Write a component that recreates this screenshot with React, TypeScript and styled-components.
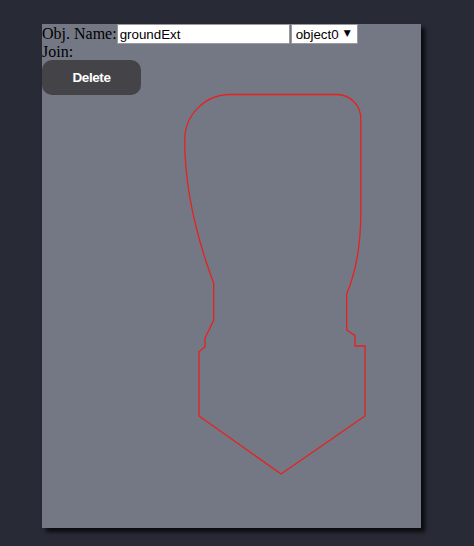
import React from "react";
import styled, { createGlobalStyle } from "styled-components";

const Global = createGlobalStyle`
  html, body { margin: 0; padding: 0; background: #282a36; }
  body { width: 474px; height: 546px; overflow: hidden; }
`;

const Page = styled.div`
  padding: 24px 0 0 42px;
`;

const Panel = styled.div`
  position: relative;
  width: 379px;
  height: 504px;
  background: #747884;
  box-shadow: 4px 4px 4px rgba(0, 0, 0, 0.75);
  font-family: "Liberation Serif", "Times New Roman", serif;
  font-size: 16px;
  color: #000;
`;

const Row = styled.div<{ $h: number }>`
  display: flex;
  align-items: center;
  height: ${(p) => p.$h}px;
  line-height: ${(p) => p.$h}px;
  position: relative;
  z-index: 1;
`;

const NameInput = styled.input`
  box-sizing: border-box;
  width: 173px;
  height: 20px;
  margin: 0 1px 0 0;
  padding: 1px 2px;
  border: 1px solid #9a9a9a;
  background: #fff;
  font-family: "Liberation Sans", Arial, sans-serif;
  font-size: 13.33px;
  color: #000;
  outline: none;
`;

const SelectBox = styled.div`
  position: relative;
  box-sizing: border-box;
  width: 67px;
  height: 20px;
  border: 1px solid #9a9a9a;
  background: #fff;
  display: flex;
  align-items: center;
`;

const Select = styled.select`
  appearance: none;
  border: none;
  background: transparent;
  width: 100%;
  height: 100%;
  padding: 0 0 0 4px;
  font-family: "Liberation Sans", Arial, sans-serif;
  font-size: 13.33px;
  color: #000;
  outline: none;
`;

const Arrow = styled.span`
  position: absolute;
  right: 6px;
  top: 0;
  line-height: 17px;
  font-size: 9px;
  font-family: "DejaVu Sans", sans-serif;
  pointer-events: none;
`;

const DeleteButton = styled.button`
  display: block;
  width: 99px;
  height: 35px;
  border: none;
  border-radius: 10px;
  background: #444448;
  color: #fff;
  font-family: "Liberation Sans", Arial, sans-serif;
  font-size: 13.5px;
  font-weight: 600;
  letter-spacing: -0.4px;
  position: relative;
  z-index: 1;
`;

const Drawing = styled.svg`
  position: absolute;
  left: 0;
  top: 0;
  width: 379px;
  height: 504px;
`;

const shape =
  "M 188 70.5 L 294.5 70.5 A 24 24 0 0 1 318.8 94.5 L 318.8 189 " +
  "C 318.8 225 313 250 304.7 270 L 304.7 306 L 313 311.7 L 313 322 L 323 322 " +
  "L 323 392 L 239 450 L 157 392 L 157 327.7 L 163 322.7 L 163 314.3 L 171.7 296 " +
  "L 171.7 259.3 C 157 220 142.7 170 142.7 116 A 45.5 45.5 0 0 1 188 70.5 Z";

export default function App() {
  return (
    <>
      <Global />
      <Page>
        <Panel>
          <Drawing viewBox="0 0 379 504">
            <path d={shape} fill="none" stroke="#e8201f" strokeWidth={1.3} />
          </Drawing>
          <Row $h={20}>
            <span>Obj. Name:</span>
            <NameInput defaultValue="groundExt" />
            <SelectBox>
              <Select defaultValue="object0">
                <option value="object0">object0</option>
              </Select>
              <Arrow>▼</Arrow>
            </SelectBox>
          </Row>
          <Row $h={16}>Join:</Row>
          <DeleteButton>Delete</DeleteButton>
        </Panel>
      </Page>
    </>
  );
}
